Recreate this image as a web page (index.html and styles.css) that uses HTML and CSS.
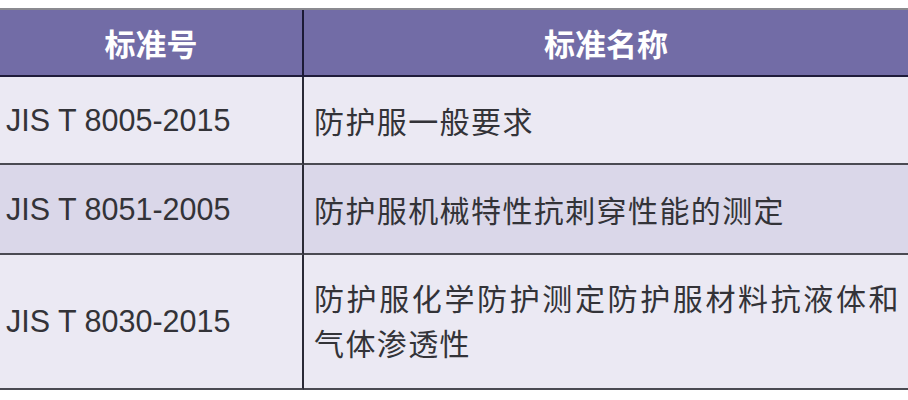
FILE: index.html
```html
<!DOCTYPE html>
<html lang="zh-CN">
<head>
<meta charset="utf-8">
<title>标准</title>
<link rel="stylesheet" href="styles.css">
</head>
<body>
<div class="page">
  <div class="table">
    <div class="cell head first">标准号</div>
    <div class="cell head">标准名称</div>

    <div class="cell code first r1">JIS T 8005-2015</div>
    <div class="cell name r1">防护服一般要求</div>

    <div class="cell code first r2">JIS T 8051-2005</div>
    <div class="cell name r2">防护服机械特性抗刺穿性能的测定</div>

    <div class="cell code first r3">JIS T 8030-2015</div>
    <div class="cell name r3">防护服化学防护测定防护服材料抗液体和气体渗透性</div>
  </div>
</div>
</body>
</html>
```
FILE: styles.css
```css
html, body {
  margin: 0;
  padding: 0;
  background: #ffffff;
}

.page {
  padding-top: 8px;
  width: 908px;
}

.table {
  display: grid;
  grid-template-columns: 304px 1fr;
  grid-template-rows: 67px 88px 90px 135px;
  border-top: 2px solid #8a8a90;
  font-family: "Liberation Sans", "Noto Sans CJK SC", sans-serif;
  color: #333338;
}

.cell {
  box-sizing: border-box;
  display: flex;
  align-items: center;
  border-bottom: 2px solid #4a4a52;
  font-size: 30.5px;
  min-width: 0;
}

.cell.first {
  border-right: 2px solid #2a2a36;
}

.head {
  background: #726ca6;
  color: #ffffff;
  font-family: "Noto Sans CJK SC", sans-serif;
  font-weight: 700;
  font-size: 31px;
  justify-content: center;
  border-bottom-color: #1f1c3a;
}

.head.first {
  border-right-color: #1c1a36;
}

.r1, .r3 {
  background: #ebe9f3;
}

.r2 {
  background: #dad7e9;
}

.code {
  padding-left: 6px;
}

.name {
  font-family: "Noto Sans CJK SC", sans-serif;
  font-size: 30px;
  padding-left: 10px;
  padding-right: 8px;
  letter-spacing: 1.4px;
  line-height: 45px;
  text-align: justify;
}

.r3.name {
  padding-bottom: 4px;
}
```
